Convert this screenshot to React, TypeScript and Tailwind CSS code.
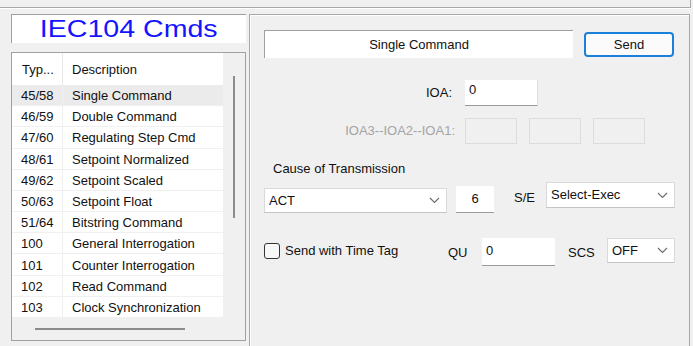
import React from 'react';

const rows: [string, string][] = [
  ['45/58', 'Single Command'],
  ['46/59', 'Double Command'],
  ['47/60', 'Regulating Step Cmd'],
  ['48/61', 'Setpoint Normalized'],
  ['49/62', 'Setpoint Scaled'],
  ['50/63', 'Setpoint Float'],
  ['51/64', 'Bitstring Command'],
  ['100', 'General Interrogation'],
  ['101', 'Counter Interrogation'],
  ['102', 'Read Command'],
  ['103', 'Clock Synchronization'],
];

function Chevron() {
  return (
    <svg width="11" height="7" viewBox="0 0 11 7" className="shrink-0">
      <path d="M1 1 L5.5 5.5 L10 1" fill="none" stroke="#6b6b6b" strokeWidth="1.1" />
    </svg>
  );
}

function Combo({ value, className }: { value: string; className: string }) {
  return (
    <div
      className={`flex items-center justify-between bg-white border border-[#d9d9d9] border-b-[#c4c4c4] pl-[4px] pr-[6px] ${className}`}
    >
      <span>{value}</span>
      <Chevron />
    </div>
  );
}

export default function App() {
  return (
    <div
      className="w-[693px] h-[346px] overflow-hidden bg-[#f0f0f0] text-[13px] leading-[16px] text-[#111]"
      style={{ fontFamily: '"Liberation Sans", Arial, sans-serif' }}
    >
      {/* Top strip */}
      <div className="h-[8px] w-[691px] border-b border-r border-[#a8a8a8] shadow-[0_1px_0_#fff]" />

      <div className="flex mt-[6px]">
        {/* Left column */}
        <div className="ml-[11px] w-[235px] flex flex-col">
          <div className="h-[29px] bg-white border-t border-l border-[#a0a0a0] flex items-center justify-center text-[24px] leading-[28px] text-[#1414ff]">
            <span className="inline-block scale-x-[1.19]">IEC104 Cmds</span>
          </div>

          <div className="mt-[9px] h-[289px] border border-[#a0a0a0] flex flex-col">
            <div className="flex flex-1 min-h-0">
              <div className="w-[211px] bg-white flex flex-col">
                <div className="flex h-[32px] items-center">
                  <div className="w-[51px] pl-[10px] pt-[2px] border-r border-[#e8e8e8] h-full flex items-center">Typ...</div>
                  <div className="pl-[9px] pt-[2px]">Description</div>
                </div>
                {rows.map(([t, d], i) => (
                  <div
                    key={t}
                    className={`flex h-[21.2px] items-center border-b border-[#f0f0f0] ${i === 0 ? 'bg-[#ebebeb]' : ''}`}
                  >
                    <div className="w-[51px] pl-[9px] pt-[2px] border-r border-[#f0f0f0] h-full flex items-center">{t}</div>
                    <div className="pl-[9px] pt-[2px] whitespace-nowrap">{d}</div>
                  </div>
                ))}
              </div>
              {/* vertical scrollbar */}
              <div className="flex-1 pt-[23px] pl-[10px]">
                <div className="w-[2px] h-[142px] bg-[#8c8c8c]" />
              </div>
            </div>
            {/* horizontal scrollbar */}
            <div className="h-[22px] flex items-center">
              <div className="ml-[23px] w-[150px] h-[2px] bg-[#8c8c8c]" />
            </div>
          </div>
        </div>

        {/* Right panel */}
        <div className="ml-[3px] w-[441px] h-[340px] border-t border-l border-r border-[#a8a8a8] shadow-[inset_1px_1px_0_#fff] pl-[14px] flex flex-col">
          <div className="flex items-start mt-[15px]">
            <div className="w-[309px] h-[28px] bg-white border-t border-l border-[#a0a0a0] flex items-center justify-center">
              Single Command
            </div>
            <div className="ml-[11px] mt-[2px] w-[90px] h-[25px] rounded-[4px] border-2 border-[#1a80d9] bg-[#fbfbfb] flex items-center justify-center">
              Send
            </div>
          </div>

          <div className="flex items-center mt-[22px]">
            <div className="w-[188px] text-right">IOA:</div>
            <div className="ml-[13px] w-[73px] h-[26px] bg-white border-b border-r border-b-[#9a9a9a] border-r-[#e0e0e0] pl-[4px] pt-[2px] leading-[16px]">
              0
            </div>
          </div>

          <div className="flex items-center mt-[12px]">
            <div className="w-[191px] text-right text-[#a4a4a4]">IOA3--IOA2--IOA1:</div>
            <div className="ml-[10px] flex gap-[12px]">
              <div className="w-[52px] h-[26px] border border-[#dcdcdc]" />
              <div className="w-[52px] h-[26px] border border-[#dcdcdc]" />
              <div className="w-[52px] h-[26px] border border-[#dcdcdc]" />
            </div>
          </div>

          <div className="mt-[17px] pl-[9px]">Cause of Transmission</div>

          <div className="flex items-start mt-[5px]">
            <Combo value="ACT" className="mt-[6px] w-[183px] h-[25px]" />
            <div className="ml-[9px] mt-[4px] w-[38px] h-[27px] bg-white border-b border-[#9a9a9a] flex items-center justify-center">
              6
            </div>
            <div className="ml-[20px] mt-[8px] w-[23px]">S/E</div>
            <Combo value="Select-Exec" className="ml-[9px] w-[129px] h-[26px]" />
          </div>

          <div className="flex items-start mt-[25px]">
            <div className="w-[184px] mt-[5px] flex items-center h-[16px]">
              <div className="w-[16px] h-[16px] rounded-[3px] border border-[#333] bg-[#f7f7f7]" />
              <span className="ml-[5px]">Send with Time Tag</span>
            </div>
            <div className="w-[34px] mt-[7px]">QU</div>
            <div className="w-[73px] h-[28px] bg-white border-b border-[#9a9a9a] pl-[4px] pt-[5px]">0</div>
            <div className="ml-[13px] w-[39px] mt-[7px]">SCS</div>
            <Combo value="OFF" className="w-[68px] h-[25px]" />
          </div>
        </div>
      </div>
    </div>
  );
}
